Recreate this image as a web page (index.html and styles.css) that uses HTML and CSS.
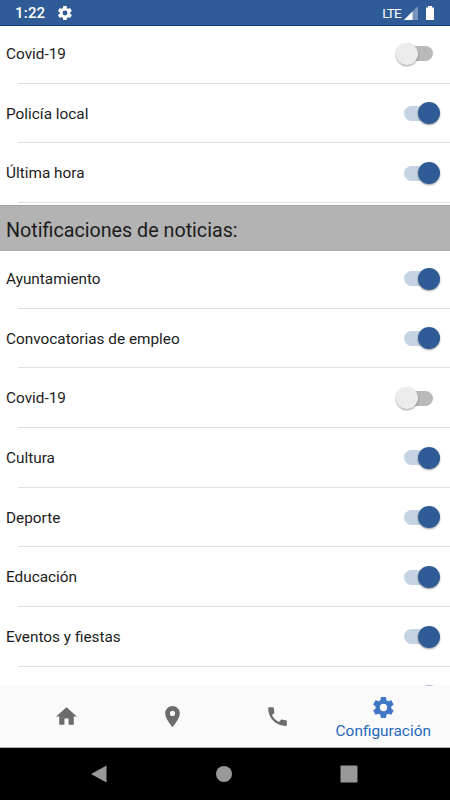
FILE: index.html
```html
<!DOCTYPE html>
<html lang="es">
<head>
    <meta charset="UTF-8">
    <meta name="viewport" content="width=device-width, initial-scale=1.0">
    <title>Configuración</title>
    <link rel="stylesheet" href="styles.css">
</head>
<body>

    <!-- Status bar -->
    <header class="status-bar">
        <span class="clock">1:22</span>
        <svg class="status-cog" viewBox="2 2 20 20"><path d="M19.4 13c0-.3.1-.6.1-1s0-.7-.1-1l2.100-1.600c.2-.2.2-.4.1-.6l-2-3.500c-.1-.2-.4-.3-.6-.2l-2.500 1c-.5-.4-1.100-.7-1.700-1l-.4-2.600c0-.3-.2-.5-.5-.5h-4c-.3 0-.5.2-.5.4L9 5.100c-.6.200-1.200.600-1.700 1l-2.500-1c-.2-.1-.5 0-.6.2l-2 3.500c-.1.200-.1.500.1.600L4.500 11c0 .3-.1.600-.1 1s0 .7.1 1l-2.200 1.600c-.2.200-.2.400-.1.600l2 3.500c.1.200.4.300.6.200l2.500-1c.5.400 1.100.700 1.700 1l.4 2.700c0 .2.200.4.500.4h4c.3 0 .5-.2.500-.4l.4-2.700c.6-.2 1.200-.6 1.700-1l2.500 1c.2.100.5 0 .6-.2l2-3.500c.1-.2.100-.5-.1-.6zM12 15.500a3.500 3.500 0 1 1 0-7 3.500 3.500 0 0 1 0 7z"/></svg>
        <span class="network">LTE</span>
        <svg class="signal" viewBox="0 0 14 14"><path d="M14 0V14H0z" opacity=".35"/><path d="M8.500 5.500V14H0z"/></svg>
        <svg class="battery" viewBox="0 0 8 14"><path d="M2 0h4v1.500h2V14H0V1.500h2z"/></svg>
    </header>

    <!-- Notification settings -->
    <main class="settings">
        <div class="row"><span>Covid-19</span><div class="switch"></div></div>
        <div class="row"><span>Policía local</span><div class="switch on"></div></div>
        <div class="row"><span>Última hora</span><div class="switch on"></div></div>

        <h2 class="section-title">Notificaciones de noticias:</h2>

        <div class="row"><span>Ayuntamiento</span><div class="switch on"></div></div>
        <div class="row"><span>Convocatorias de empleo</span><div class="switch on"></div></div>
        <div class="row"><span>Covid-19</span><div class="switch"></div></div>
        <div class="row"><span>Cultura</span><div class="switch on"></div></div>
        <div class="row"><span>Deporte</span><div class="switch on"></div></div>
        <div class="row"><span>Educación</span><div class="switch on"></div></div>
        <div class="row"><span>Eventos y fiestas</span><div class="switch on"></div></div>
        <div class="row"><span></span><div class="switch on"></div></div>
    </main>

    <!-- Tabs -->
    <nav class="tabs">
        <a class="tab">
            <svg viewBox="0 0 24 24"><path d="M10 20v-6h4v6h5v-8h3L12 3 2 12h3v8z"/></svg>
        </a>
        <a class="tab">
            <svg viewBox="0 0 24 24"><path d="M12 2C8.130 2 5 5.130 5 9c0 5.250 7 13 7 13s7-7.750 7-13c0-3.870-3.130-7-7-7zm0 9.500a2.500 2.500 0 1 1 0-5 2.500 2.500 0 0 1 0 5z"/></svg>
        </a>
        <a class="tab">
            <svg viewBox="0 0 24 24"><path d="M20 15.500c-1.250 0-2.450-.2-3.570-.57a1 1 0 0 0-1.020.24l-2.200 2.200a15.050 15.050 0 0 1-6.590-6.580l2.200-2.210a1 1 0 0 0 .25-1.010A11.360 11.360 0 0 1 8.500 4a1 1 0 0 0-1-1H4a1 1 0 0 0-1 1c0 9.390 7.610 17 17 17a1 1 0 0 0 1-1v-3.500a1 1 0 0 0-1-1z"/></svg>
        </a>
        <a class="tab active">
            <svg viewBox="0 0 24 24"><path d="M19.400 13c0-.3.1-.6.1-1s0-.7-.1-1l2.100-1.600c.2-.2.2-.4.1-.6l-2-3.500c-.1-.2-.4-.3-.6-.2l-2.500 1c-.5-.4-1.100-.7-1.700-1l-.4-2.600c0-.3-.2-.5-.5-.5h-4c-.3 0-.5.2-.5.4L9 5.100c-.6.200-1.200.600-1.700 1l-2.500-1c-.2-.1-.5 0-.6.2l-2 3.500c-.1.200-.1.500.1.600L4.500 11c0 .3-.1.600-.1 1s0 .7.1 1l-2.200 1.600c-.2.200-.2.400-.1.600l2 3.500c.1.200.4.300.6.200l2.500-1c.5.400 1.100.700 1.700 1l.4 2.700c0 .2.200.4.500.4h4c.3 0 .5-.2.500-.4l.4-2.700c.6-.2 1.200-.6 1.700-1l2.500 1c.2.100.5 0 .6-.2l2-3.500c.1-.2.100-.5-.1-.6zM12 15.500a3.500 3.500 0 1 1 0-7 3.500 3.500 0 0 1 0 7z"/></svg>
            <span>Configuración</span>
        </a>
    </nav>

    <!-- Android buttons -->
    <footer class="system-nav">
        <svg viewBox="0 0 18 18"><path d="M16.500.5v17L1 9z"/></svg>
        <svg viewBox="0 0 18 18"><circle cx="9" cy="9" r="8"/></svg>
        <svg viewBox="0 0 18 18"><rect x=".5" y=".5" width="17" height="17" rx="1"/></svg>
    </footer>

</body>
</html>
```
FILE: styles.css
```css
* {
    box-sizing: border-box;
}

body {
    margin: 0;
    height: 800px;
    display: flex;
    flex-direction: column;
    overflow: hidden;
    font-family: Roboto, sans-serif;
    background-color: white;
    color: #1c1c1c;
}

svg {
    display: block;
    fill: currentColor;
    flex-shrink: 0;
}

/* Status bar */
.status-bar {
    height: 26px;
    flex-shrink: 0;
    display: flex;
    align-items: center;
    padding: 1px 16px 0 15px;
    background-color: #2f5c96;
    border-bottom: 1px solid #0f4187;
    color: white;
}

.clock {
    font-size: 15px;
    font-weight: 500;
    letter-spacing: 0.2px;
}

.status-cog {
    width: 14px;
    height: 14px;
    margin-left: 13px;
}

.network {
    margin-left: auto;
    font-size: 13.5px;
    letter-spacing: -0.8px;
}

.signal {
    width: 14px;
    height: 14px;
    margin-left: 3px;
}

.battery {
    width: 8px;
    height: 14px;
    margin-left: 8px;
}

/* Settings list */
.settings {
    flex: 1;
    min-height: 0;
    overflow: hidden;
}

.row {
    height: 59.67px;
    display: flex;
    align-items: center;
    justify-content: space-between;
    padding: 0 10px 0 6px;
    font-size: 15.35px;
    background: linear-gradient(#e0e0e0, #e0e0e0) 17.5px 100% / 100% 1px no-repeat;
}

.row span {
    padding-top: 0.5px;
}

.row:first-child {
    margin-top: -2px;
}

.section-title {
    height: 46px;
    margin: 2px 0 -2px;
    padding: 3px 6px 0;
    line-height: 44px;
    font-size: 19.7px;
    font-weight: 400;
    background-color: #b3b3b3;
    border-top: 1px solid #a2a2a2;
    border-bottom: 1px solid #a8a8a8;
}

/* Switch */
.switch {
    position: relative;
    width: 36px;
    height: 15px;
    padding-right: 7px;
}

.switch::before {
    content: "";
    display: block;
    width: 29px;
    height: 15px;
    border-radius: 8px;
    background-color: #b9b9b9;
}

.switch::after {
    content: "";
    position: absolute;
    top: -3.5px;
    left: -7.6px;
    width: 22px;
    height: 22px;
    border-radius: 50%;
    background-color: #ececec;
    box-shadow: 0 1px 2px rgba(0, 0, 0, 0.4);
}

.switch.on::before {
    background-color: #c6d3e2;
}

.switch.on::after {
    left: 14.4px;
    background-color: #2f5c96;
}

/* Tabs, the list shows faintly through the top edge */
.tabs {
    position: relative;
    height: 63px;
    margin-top: -2px;
    flex-shrink: 0;
    display: flex;
    padding: 0 14px;
    background: linear-gradient(rgba(250, 250, 250, 0.6) 1.5px, #fafafa 1.5px);
    border-bottom: 1px solid #b0b0b0;
}

.tab {
    flex: 1 1 0;
    min-width: 0;
    display: flex;
    flex-direction: column;
    align-items: center;
    justify-content: center;
    padding-top: 1px;
    color: #6c6c6c;
}

.tab svg {
    width: 25px;
    height: 25px;
}

.tab.active {
    padding-top: 3px;
    color: #4077c4;
}

.tab span {
    margin-top: 2px;
    font-size: 15.4px;
    line-height: 18px;
    color: #2567bd;
}

/* Android buttons */
.system-nav {
    height: 52px;
    flex-shrink: 0;
    display: flex;
    justify-content: space-between;
    align-items: center;
    padding: 0 92px 1px 90px;
    background-color: black;
    color: #999;
}

.system-nav svg {
    width: 18px;
    height: 18px;
}
```
